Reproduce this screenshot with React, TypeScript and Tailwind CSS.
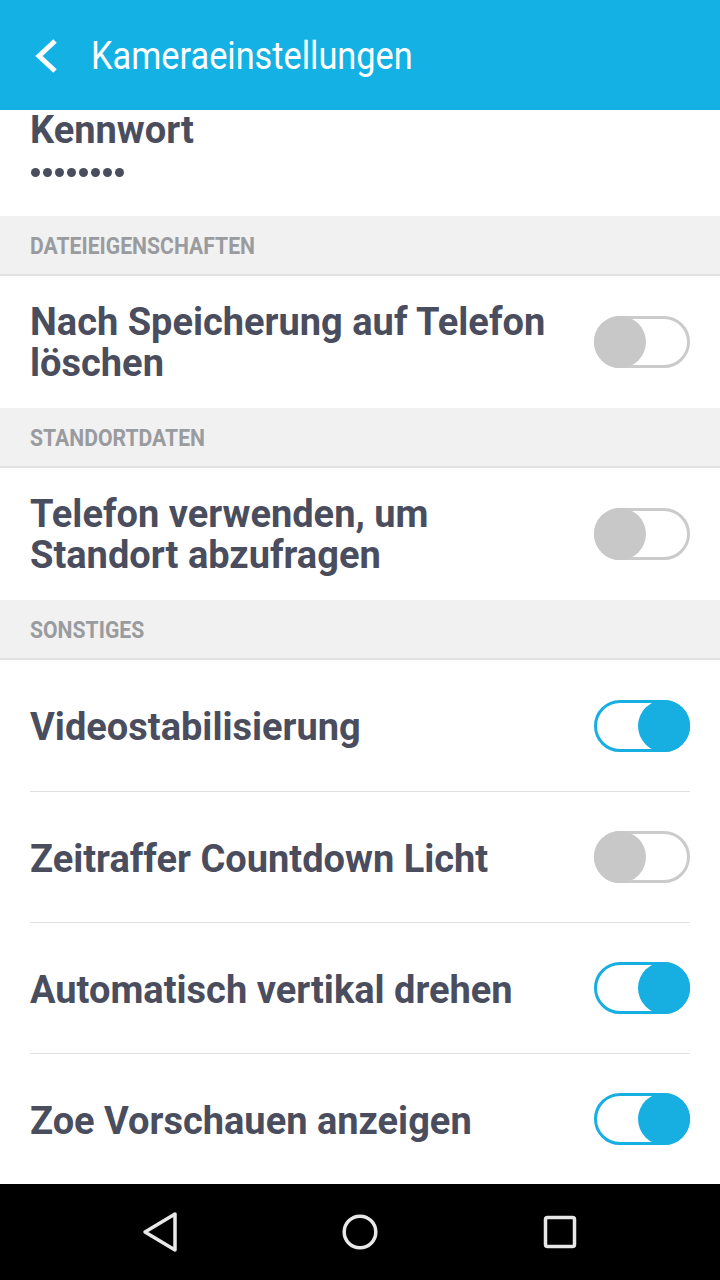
import React from "react";

const Toggle = ({ on }: { on: boolean }) =>
  on ? (
    <div className="relative w-[96px] h-[52px] rounded-full border-[3px] border-[#17aee2] shrink-0">
      <div className="absolute right-[-3px] top-[-3px] w-[52px] h-[52px] rounded-full bg-[#17aee2]" />
    </div>
  ) : (
    <div className="relative w-[96px] h-[52px] rounded-full border-[3px] border-[#cbcbcb] shrink-0">
      <div className="absolute left-[-3px] top-[-3px] w-[52px] h-[52px] rounded-full bg-[#c8c8c8]" />
    </div>
  );

const Section = ({ title }: { title: string }) => (
  <div className="h-[60px] bg-[#f1f1f1] border-b-2 border-[#e2e2e2] flex items-center px-[30px] shrink-0">
    <span className="inline-block origin-left scale-x-[0.92] text-[23px] font-bold text-[#9a9b9f] mt-[5px]">
      {title}
    </span>
  </div>
);

const Row = ({
  children,
  on,
  divider,
  h = 131,
  single,
}: {
  children: React.ReactNode;
  on: boolean;
  divider?: boolean;
  h?: number;
  single?: boolean;
}) => (
  <div className="px-[30px] shrink-0">
    <div
      className={`flex items-center justify-between ${divider ? "border-b border-[#e0e0e0]" : ""}`}
      style={{ height: h }}
    >
      <div
        className={`text-[38px] leading-[41px] font-bold text-[#4a4d5d] pr-4 ${single ? "mt-[4px]" : "mt-[2px]"}`}
      >
        {children}
      </div>
      <Toggle on={on} />
    </div>
  </div>
);

export default function App() {
  return (
    <div
      className="w-[720px] h-[1280px] bg-white flex flex-col overflow-hidden"
      style={{ fontFamily: "Roboto, 'Liberation Sans', sans-serif" }}
    >
      <div className="h-[110px] bg-[#14b1e4] flex items-center shrink-0">
        <svg width="26" height="36" viewBox="0 0 26 36" className="ml-[33px] mt-[1px]">
          <path d="M22 3 L6 18 L22 33" stroke="white" strokeWidth="5" fill="none" strokeLinecap="butt" strokeLinejoin="miter" />
        </svg>
        <span className="ml-[32px] inline-block origin-left scale-x-[0.88] text-[39px] text-white leading-none mt-[2px]">
          Kameraeinstellungen
        </span>
      </div>
      <div className="h-[106px] px-[30px] shrink-0">
        <div className="text-[38px] leading-[38px] font-bold text-[#4a4d5d] mt-[1px]">Kennwort</div>
        <div className="flex gap-[3px] mt-[19px] ml-[1px]">
          {Array.from({ length: 8 }).map((_, i) => (
            <div key={i} className="w-[9px] h-[9px] rounded-full bg-[#4a4d5d]" />
          ))}
        </div>
      </div>
      <Section title="DATEIEIGENSCHAFTEN" />
      <Row on={false} h={132}>
        Nach Speicherung auf Telefon
        <br />
        löschen
      </Row>
      <Section title="STANDORTDATEN" />
      <Row on={false} h={132}>
        Telefon verwenden, um
        <br />
        Standort abzufragen
      </Row>
      <Section title="SONSTIGES" />
      <Row on={true} divider single h={132}>
        Videostabilisierung
      </Row>
      <Row on={false} divider single>
        Zeitraffer Countdown Licht
      </Row>
      <Row on={true} divider single>
        Automatisch vertikal drehen
      </Row>
      <Row on={true} single h={130}>
        Zoe Vorschauen anzeigen
      </Row>
      <div className="flex-1" />
      <div className="h-[96px] bg-black flex items-center justify-center gap-[160px] shrink-0">
        <svg width="40" height="42" viewBox="0 0 40 42">
          <path d="M35 3 L35 39 L5 21 Z" stroke="#e8e8e8" strokeWidth="3.5" fill="none" strokeLinejoin="round" />
        </svg>
        <svg width="40" height="40" viewBox="0 0 40 40">
          <circle cx="20" cy="20" r="15.8" stroke="#e8e8e8" strokeWidth="3.5" fill="none" />
        </svg>
        <svg width="40" height="40" viewBox="0 0 40 40">
          <rect x="5.5" y="5.5" width="29" height="29" rx="2" stroke="#e8e8e8" strokeWidth="3.5" fill="none" />
        </svg>
      </div>
    </div>
  );
}
